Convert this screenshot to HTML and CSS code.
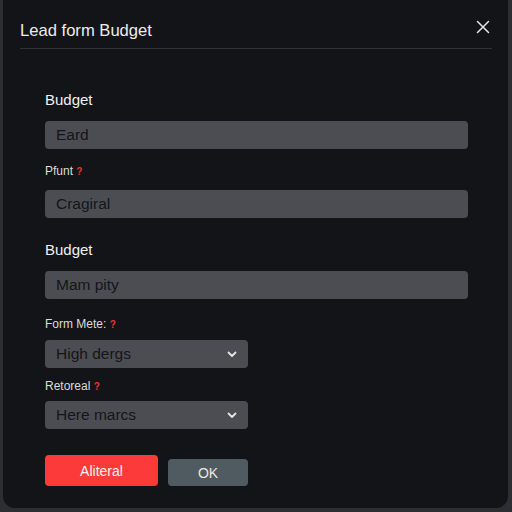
FILE: index.html
```html
<!DOCTYPE html>
<html>
<head>
<meta charset="utf-8">
<link rel="stylesheet" href="styles.css">
</head>
<body>
<div class="dialog">
  <div class="header">
    <h1 class="title">Lead form Budget</h1>
    <svg class="close" width="14" height="14" viewBox="0 0 14 14"><path d="M1.5 1.5L12.5 12.5M12.5 1.5L1.5 12.5" stroke="#e6e6e6" stroke-width="1.5" stroke-linecap="round"/></svg>
  </div>
  <div class="body">
    <h2 class="section">Budget</h2>
    <div class="input">Eard</div>
    <label class="label">Pfunt <span class="req">?</span></label>
    <div class="input i2">Cragiral</div>
    <h2 class="section s2">Budget</h2>
    <div class="input">Mam pity</div>
    <label class="label l3">Form Mete: <span class="req">?</span></label>
    <div class="input select sel1">High dergs
      <svg width="10" height="7" viewBox="0 0 10 7"><path d="M1.5 1.5L5 5L8.5 1.5" fill="none" stroke="#e6e6e6" stroke-width="1.8" stroke-linecap="round" stroke-linejoin="round"/></svg>
    </div>
    <label class="label l4">Retoreal <span class="req">?</span></label>
    <div class="input select sel2">Here marcs
      <svg width="10" height="7" viewBox="0 0 10 7"><path d="M1.5 1.5L5 5L8.5 1.5" fill="none" stroke="#e6e6e6" stroke-width="1.8" stroke-linecap="round" stroke-linejoin="round"/></svg>
    </div>
    <div class="actions">
      <button class="btn primary">Aliteral</button>
      <button class="btn secondary">OK</button>
    </div>
  </div>
</div>
</body>
</html>
```
FILE: styles.css
```css
* { box-sizing: border-box; }
html, body { margin: 0; padding: 0; }
body {
  width: 512px;
  height: 512px;
  background: #2c2e33;
  font-family: "Liberation Sans", Arial, sans-serif;
  padding: 0 4px 4px 3px;
}
.dialog {
  width: 505px;
  height: 508px;
  background: #131418;
  border-radius: 0 0 12px 12px;
  padding: 0 16px 0 17px;
}
.header {
  display: flex;
  align-items: flex-start;
  justify-content: space-between;
  height: 49px;
  border-bottom: 1px solid #2f3136;
  padding-top: 21px;
}
.title {
  margin: 0;
  font-size: 16.6px;
  font-weight: 400;
  color: #ececec;
  line-height: 20px;
}
.close { margin-top: -1px; margin-right: 2px; }
.body {
  padding: 0 24px 0 25px;
}
.section {
  margin: 42px 0 0 0;
  font-size: 15px;
  font-weight: 500;
  color: #f0f0f0;
  line-height: 18px;
}
.s2 { margin-top: 23px; }
.input {
  margin-top: 12px;
  height: 28px;
  background: #4b4d53;
  border-radius: 4px;
  color: #141518;
  font-size: 15.5px;
  line-height: 28px;
  padding-left: 11px;
}
.label {
  display: block;
  margin-top: 16px;
  font-size: 12px;
  color: #dcdcdc;
  line-height: 13px;
}
.i2 { margin-top: 12px; }
.l3 { margin-top: 19px; }
.sel1 { margin-top: 9px; }
.l4 { margin-top: 12px; }
.sel2 { margin-top: 8px; }
.req { color: #e53535; font-weight: 700; font-size: 10px; }
.select {
  width: 203px;
  display: flex;
  align-items: center;
  justify-content: space-between;
  padding-right: 11px;
}
.actions {
  display: flex;
  align-items: flex-end;
  gap: 10px;
  margin-top: 26px;
}
.btn {
  border: none;
  font-family: "Liberation Sans", Arial, sans-serif;
  font-size: 14px;
  color: #f4f4f4;
  border-radius: 4px;
  padding: 0;
}
.primary {
  width: 113px;
  height: 31px;
  background: #fd3a3a;
}
.secondary {
  width: 80px;
  height: 27px;
  background: #505a61;
  color: #e8e8e8;
}
```
